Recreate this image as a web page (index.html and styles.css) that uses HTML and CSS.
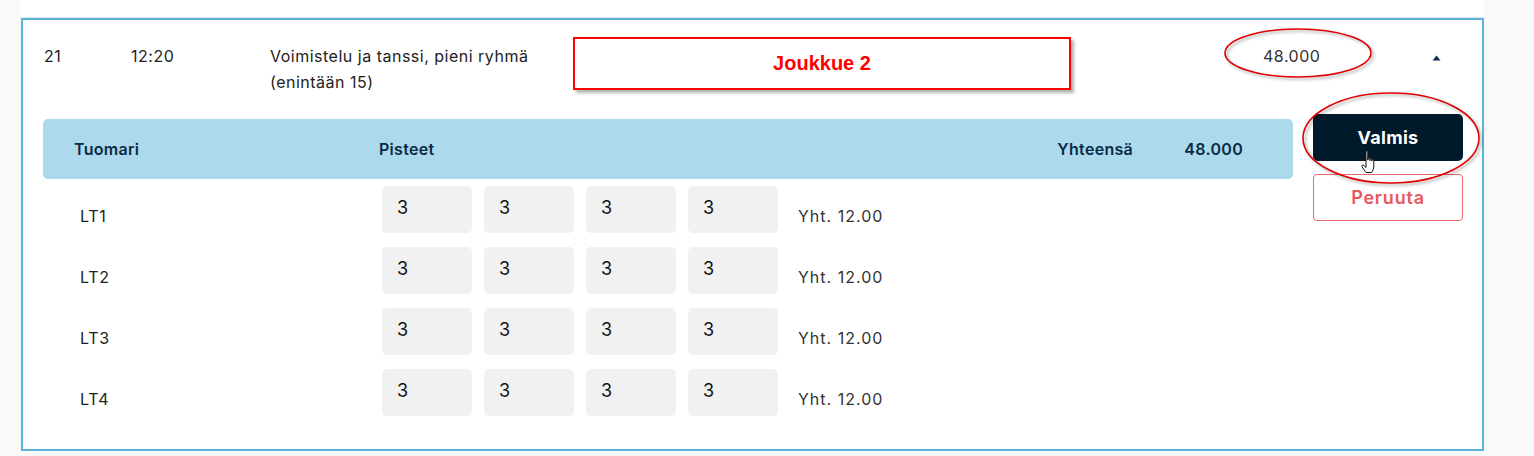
FILE: index.html
```html
<!DOCTYPE html>
<html lang="fi">
<head>
<meta charset="utf-8">
<title>Tulokset</title>
<link rel="stylesheet" href="styles.css">
</head>
<body>
<div class="page">
  <div class="prev"></div>
  <div class="card">
    <div class="summary">
      <span class="num">21</span>
      <span class="time">12:20</span>
      <span class="desc">Voimistelu ja tanssi, pieni ryhmä<br>(enintään 15)</span>
      <span class="score">48.000</span>
      <span class="caret"><svg width="9" height="6" viewBox="0 0 9 6"><path d="M4.5 0.5 L8.5 5.5 L0.5 5.5 Z" fill="#0c2c4c"/></svg></span>
    </div>
    <div class="detail">
      <div class="sheet">
        <div class="bar">
          <span>Tuomari</span>
          <span>Pisteet</span>
          <span>Yhteensä</span>
          <span>48.000</span>
        </div>
        <div class="row">
          <span class="judge">LT1</span>
          <span class="box">3</span><span class="box">3</span><span class="box">3</span><span class="box">3</span>
          <span class="sum">Yht. 12.00</span>
        </div>
        <div class="row">
          <span class="judge">LT2</span>
          <span class="box">3</span><span class="box">3</span><span class="box">3</span><span class="box">3</span>
          <span class="sum">Yht. 12.00</span>
        </div>
        <div class="row">
          <span class="judge">LT3</span>
          <span class="box">3</span><span class="box">3</span><span class="box">3</span><span class="box">3</span>
          <span class="sum">Yht. 12.00</span>
        </div>
        <div class="row">
          <span class="judge">LT4</span>
          <span class="box">3</span><span class="box">3</span><span class="box">3</span><span class="box">3</span>
          <span class="sum">Yht. 12.00</span>
        </div>
      </div>
      <div class="actions">
        <button class="btn-done">Valmis</button>
        <button class="btn-cancel">Peruuta</button>
      </div>
    </div>

    <div class="note-box">Joukkue 2</div>
    <svg class="ring ring-score" width="156" height="56" viewBox="0 0 156 56">
      <ellipse cx="76" cy="27" rx="73" ry="24" fill="none" stroke="#e00000" stroke-width="1.6"/>
    </svg>
    <svg class="ring ring-done" width="184" height="98" viewBox="0 0 184 98">
      <ellipse cx="91" cy="48" rx="88" ry="45" fill="none" stroke="#e00000" stroke-width="1.6"/>
    </svg>
    <svg class="cursor" width="18" height="26" viewBox="0 0 18 26">
      <path d="M5 1.5 C5 0.7 6.8 0.7 6.8 1.5 L6.8 10 L7 10 L7 8 C7 7.2 8.8 7.2 8.8 8 L8.8 10.5 L9 10.5 L9 8.8 C9 8 10.8 8 10.8 8.8 L10.8 11 L11 11 L11 9.8 C11 9 12.8 9 12.8 9.8 L12.8 16 C12.8 19 11.5 21 10.5 22.5 L5 22.5 C4 21 2 18.5 1 16.5 C0.5 15.5 1.5 14.5 2.5 15.2 L5 17.5 Z" fill="#fff" stroke="#111" stroke-width="1" stroke-linejoin="round"/>
    </svg>
  </div>
</div>
</body>
</html>
```
FILE: styles.css
```css
* { box-sizing: border-box; }

html, body {
  margin: 0;
  background: #f9f9f9;
  font-family: "Inter", "Noto Sans", sans-serif;
  color: #222;
}

.page {
  width: 1484px;
  padding-left: 21px;
}

.prev {
  height: 18px;
  margin-left: -1px;
  background: #fff;
  border-bottom: 1px solid #e3e6e6;
}

.card {
  position: relative;
  background: #fff;
  border: 2px solid #5ab4da;
  height: 433px;
}

/* summary row */
.summary {
  display: grid;
  grid-template-columns: 87px 139px 1fr 169px 9px;
  align-items: start;
  padding: 23px 41px 0 21px;
  font-size: 16px;
  letter-spacing: 0.5px;
  line-height: 26px;
  color: #222;
}

.caret {
  display: flex;
  align-items: center;
  height: 26px;
  padding-top: 3px;
}

.score { color: #333; }

/* detail */
.detail {
  display: flex;
  gap: 20px;
  padding: 19px 19px 0 20px;
}

.sheet {
  flex: 1;
  padding-top: 5px;
}

.bar {
  display: grid;
  grid-template-columns: 305px 1fr 127px auto;
  align-items: center;
  height: 60px;
  padding: 0 50px 0 31px;
  background: #acd9ec;
  border-radius: 5px;
  color: #0b2a45;
  font-size: 16px;
  letter-spacing: 0.3px;
  font-weight: 600;
}

.row {
  display: grid;
  grid-template-columns: 327px repeat(4, 90px) auto;
  column-gap: 12px;
  align-items: center;
  height: 47px;
  margin-top: 14px;
  font-size: 16px;
}

.bar + .row { margin-top: 7px; }

.judge {
  padding-left: 37px;
  padding-top: 12px;
  letter-spacing: 0.7px;
  color: #222;
}

.box {
  align-self: stretch;
  background: #f1f1f1;
  border-radius: 5px;
  padding: 11px 0 0 15px;
  font-size: 18px;
  color: #111;
}

.sum {
  padding-left: 8px;
  padding-top: 12px;
  letter-spacing: 1px;
  color: #333;
}

.actions {
  width: 150px;
  display: flex;
  flex-direction: column;
  gap: 13px;
}

.actions button {
  height: 47px;
  width: 150px;
  padding: 0;
  font-family: inherit;
  font-size: 18px;
  cursor: pointer;
}

.btn-done {
  background: #011a2b;
  color: #fff;
  border: none;
  border-radius: 5px;
  font-weight: 700;
  letter-spacing: 0.3px;
}

.btn-cancel {
  background: #fff;
  color: #e8575c;
  border: 1px solid #ea6a6e;
  border-radius: 4px;
  font-weight: 600;
  letter-spacing: 0.8px;
}

/* screenshot annotations */
.note-box {
  position: absolute;
  left: 550px;
  top: 17px;
  width: 498px;
  height: 53px;
  border: 2px solid #ff0000;
  box-shadow: 3px 3px 3px rgba(0, 0, 0, 0.3);
  background: #fff;
  color: #ff0000;
  font-family: "Liberation Sans", Arial, sans-serif;
  font-weight: 700;
  font-size: 20px;
  display: flex;
  align-items: center;
  justify-content: center;
}

.ring {
  position: absolute;
  overflow: visible;
  filter: drop-shadow(2px 2px 1.5px rgba(0, 0, 0, 0.35));
}

.ring-score { left: 1199px; top: 6px; }
.ring-done { left: 1277px; top: 70px; }

.cursor {
  position: absolute;
  left: 1338px;
  top: 130px;
}
```
